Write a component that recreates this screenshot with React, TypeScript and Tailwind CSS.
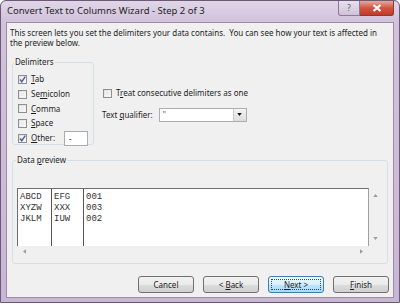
import React from "react";

const ui = { fontFamily: '"Noto Sans", "Open Sans", sans-serif' };
const mono = { fontFamily: '"Liberation Mono", "DejaVu Sans Mono", monospace' };

function Check({ checked }: { checked?: boolean }) {
  return (
    <span className="relative inline-block w-[9px] h-[9px] border border-[#8e8f8f] bg-gradient-to-br from-[#dcdcdc] to-[#fbfbfb] shrink-0">
      <span className="absolute inset-[1px] border border-[#f4f4f4]" />
      {checked && (
        <svg viewBox="0 0 9 9" className="absolute -left-px -top-px w-[9px] h-[9px]">
          <path d="M2 4.5 L3.8 6.8 L7.2 1.6" fill="none" stroke="#4a5f97" strokeWidth="1.4" />
        </svg>
      )}
    </span>
  );
}

function CheckRow({ label, checked }: { label: [string, string, string]; checked?: boolean }) {
  return (
    <div className="flex items-center gap-[4px] h-[14.7px]">
      <Check checked={checked} />
      <span className="text-[8px] text-[#1e1e1e] leading-none">
        {label[0]}
        <span className="underline">{label[1]}</span>
        {label[2]}
      </span>
    </div>
  );
}

function Btn({ children, focus }: { children: React.ReactNode; focus?: boolean }) {
  return (
    <div
      className={`w-[56px] h-[17px] rounded-[3px] border flex items-center justify-center text-[8px] text-[#1e1e1e] leading-none ${
        focus
          ? "border-[#3c7fb1] bg-[linear-gradient(#eaf6fd_0%,#d9f0fc_50%,#bee6fd_51%,#a7d9f5_100%)]"
          : "border-[#707070] bg-[linear-gradient(#f2f2f2_0%,#ebebeb_50%,#dddddd_51%,#cfcfcf_100%)]"
      }`}
    >
      {focus ? (
        <div className="w-[50px] h-[11px] border border-dotted border-[#444] flex items-center justify-center">
          {children}
        </div>
      ) : (
        children
      )}
    </div>
  );
}

export default function App() {
  const rows = [
    ["ABCD", "EFG", "001"],
    ["XYZW", "XXX", "003"],
    ["JKLM", "IUW", "002"],
  ];
  return (
    <div className="w-[400px] h-[305px] bg-white" style={ui}>
      <div className="w-[400px] h-[303px] rounded-t-[6px] border border-[#6b5a76] bg-[linear-gradient(#e0d6e8,#d2c2dc_20px,#c9b6d4)] flex flex-col">
        {/* title bar */}
        <div className="h-[20px] flex items-start justify-between pl-[6px]">
          <span className="mt-[5px] text-[9.5px] text-[#1e1e1e] leading-none">
            Convert Text to Columns Wizard - Step 2 of 3
          </span>
          <div className="flex mr-[5px]">
            <div className="w-[22px] h-[15px] border border-[#8a7a94] border-t-0 rounded-bl-[3px] bg-[linear-gradient(#e8e0ee,#cfc2d9)] flex items-center justify-center text-[8px] text-[#555] leading-none">
              ?
            </div>
            <div className="w-[34px] h-[15px] border border-[#8a3a30] border-t-0 border-l-0 rounded-br-[3px] bg-[linear-gradient(#e9a99c,#d0553f_50%,#c3392a)] flex items-center justify-center">
              <svg viewBox="0 0 10 8" className="w-[10px] h-[8px]">
                <path d="M1.5 1 L8.5 7 M8.5 1 L1.5 7" stroke="#fff" strokeWidth="2.2" />
              </svg>
            </div>
          </div>
        </div>
        {/* client area */}
        <div className="ml-[5px] mr-[5px] mt-[1px] h-[276px] border border-[#9c8ca6] bg-[#f0f0f0] flex flex-col text-[#1e1e1e]">
          <div className="px-[3px] pt-[5px] text-[8px] leading-[10px]">
            This screen lets you set the delimiters your data contains.&nbsp; You can see how your text is affected in
            <br />
            the preview below.
          </div>
          <div className="flex mt-[10px]">
            <fieldset className="ml-[5px] w-[82px] h-[87px] border border-[#d5dfe5] rounded-[3px] px-[5px] pt-[6px] m-0 min-w-0">
              <legend className="text-[8px] leading-none px-[1px] -ml-[4px]">Delimiters</legend>
              <CheckRow label={["", "T", "ab"]} checked />
              <CheckRow label={["Se", "m", "icolon"]} />
              <CheckRow label={["", "C", "omma"]} />
              <CheckRow label={["", "S", "pace"]} />
              <div className="flex items-center h-[15px]">
                <CheckRow label={["", "O", "ther:"]} checked />
                <div className="ml-[9px] w-[25px] h-[15px] bg-white border border-[#abadb3] text-[8px] leading-none pl-[4px] pt-[3px]">
                  -
                </div>
              </div>
            </fieldset>
            <div className="ml-[9px] pt-[28px] flex flex-col">
              <CheckRow label={["T", "r", "eat consecutive delimiters as one"]} />
              <div className="flex items-center mt-[7px]">
                <span className="text-[8px] leading-none -ml-[1px]">
                  Text <span className="underline">q</span>ualifier:
                </span>
                <div className="ml-[6px] w-[88px] h-[14px] bg-white border border-[#abadb3] flex">
                  <span className="flex-1 text-[8px] leading-none pl-[3px] pt-[2px] text-[#b23a3a]">"</span>
                  <div className="w-[13px] h-full border-l border-[#c9c9c9] bg-[linear-gradient(#f4f4f4,#dcdcdc)] flex items-center justify-center">
                    <svg viewBox="0 0 6 4" className="w-[5px] h-[3px]">
                      <path d="M0 0 H6 L3 4 Z" fill="#111" />
                    </svg>
                  </div>
                </div>
              </div>
            </div>
          </div>
          <fieldset className="ml-[5px] mt-[11px] w-[376px] h-[108px] border border-[#d5dfe5] rounded-[3px] m-0 min-w-0 px-[4px] pt-[24px]">
            <legend className="text-[8px] leading-none px-[1px] -ml-[1px]">
              Data <span className="underline">p</span>review
            </legend>
            <div className="flex flex-col w-[365px]">
              <div className="flex h-[58px]">
                <div className="w-[352px] bg-white border-t border-l border-[#6f6f6f] border-r border-r-[#a0a0a0] flex">
                  {[0, 1, 2].map((c) => (
                    <div
                      key={c}
                      className={`${c === 0 ? "w-[34px]" : c === 1 ? "w-[32px]" : "flex-1"} ${
                        c < 2 ? "border-r border-[#555]" : ""
                      } pl-[2px] pt-[3px]`}
                    >
                      {rows.map((r, i) => (
                        <div key={i} className="text-[9px] leading-[11px] text-[#333]" style={mono}>
                          {r[c]}
                        </div>
                      ))}
                    </div>
                  ))}
                </div>
                <div className="w-[13px] flex flex-col items-center justify-between py-[6px]">
                  <svg viewBox="0 0 6 4" className="w-[5px] h-[3px]">
                    <path d="M0 4 H6 L3 0 Z" fill="#9a9a9a" />
                  </svg>
                  <svg viewBox="0 0 6 4" className="w-[5px] h-[3px]">
                    <path d="M0 0 H6 L3 4 Z" fill="#9a9a9a" />
                  </svg>
                </div>
              </div>
              <div className="w-[352px] h-[10px] flex items-center justify-between px-[6px]">
                <svg viewBox="0 0 4 6" className="w-[3px] h-[5px]">
                  <path d="M4 0 V6 L0 3 Z" fill="#9a9a9a" />
                </svg>
                <svg viewBox="0 0 4 6" className="w-[3px] h-[5px]">
                  <path d="M0 0 V6 L4 3 Z" fill="#9a9a9a" />
                </svg>
              </div>
            </div>
          </fieldset>
          <div className="flex justify-end gap-[9px] mr-[4px] mt-[12px]">
            <Btn>Cancel</Btn>
            <Btn>
              &lt;&nbsp;<span className="underline">B</span>ack
            </Btn>
            <Btn focus>
              <span className="underline">N</span>ext&nbsp;&gt;
            </Btn>
            <Btn>
              <span className="underline">F</span>inish
            </Btn>
          </div>
        </div>
      </div>
    </div>
  );
}
